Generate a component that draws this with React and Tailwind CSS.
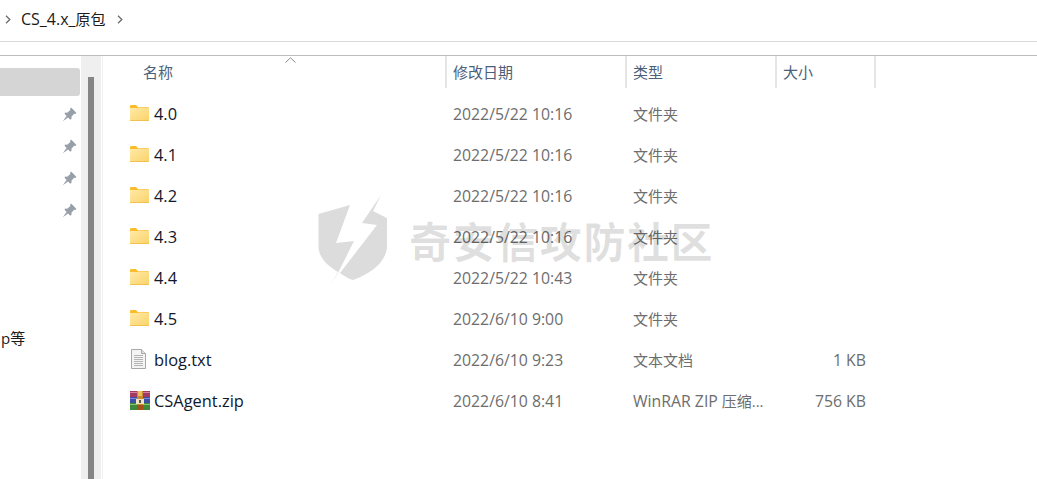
import React from 'react';

const Folder = () => (
  <svg width="19" height="16" viewBox="0 0 19 16" className="shrink-0">
    <defs>
      <linearGradient id="fg" x1="0" y1="0" x2="1" y2="1">
        <stop offset="0" stopColor="#ffeaa8" />
        <stop offset="1" stopColor="#fbd268" />
      </linearGradient>
    </defs>
    <path d="M0 1.5C0 .7.5 0 1.2 0H6l2 2.2h10c.6 0 1 .4 1 1V4H0z" fill="#fbbc2a" />
    <path d="M0 3h19v11.5c0 .8-.5 1.5-1.2 1.5H1.2C.5 16 0 15.300 0 14.500z" fill="url(#fg)" />
    <path d="M0 15h19v.2c0 .5-.5.8-1 .8H1c-.5 0-1-.3-1-.8z" fill="#f2c14e" />
  </svg>
);

const TextFile = () => (
  <svg width="17" height="20" viewBox="0 0 17 20" className="shrink-0">
    <path d="M1.500.5H11.500L15.500 4.500V19.500H1.500z" fill="#f4f4f4" stroke="#a8a8a8" />
    <path d="M11.500.5V4.500H15.500" fill="#e2e2e2" stroke="#a8a8a8" />
    <g stroke="#b4b4b4">
      <path d="M4 6.500H13M4 8.500H13M4 10.500H13M4 12.500H13M4 14.500H13M4 16.500H13" />
    </g>
  </svg>
);

const Rar = () => (
  <svg width="20" height="19" viewBox="0 0 20 19" className="shrink-0">
    <rect x="0" y="0" width="20" height="6" fill="#a33a63" />
    <rect x="0" y="6" width="20" height="6" fill="#3d4fa5" />
    <rect x="0" y="12" width="20" height="7" fill="#3f8a3a" />
    <rect x="0" y="1" width="20" height="1" fill="#d77f9e" />
    <rect x="0" y="7" width="20" height="1" fill="#7d8ad6" />
    <rect x="0" y="13" width="20" height="1" fill="#86c46f" />
    <rect x="7" y="0" width="6" height="19" fill="#c98a2e" />
    <rect x="8" y="0" width="4" height="5" fill="#e8c060" />
    <rect x="6" y="8" width="8" height="5" fill="#efe3c0" />
    <rect x="9" y="9" width="2" height="3" fill="#555" />
    <rect x="7" y="14" width="6" height="5" fill="#a8501c" />
  </svg>
);

const Pin = () => (
  <svg width="15" height="15" viewBox="0 0 14 14" className="block">
    <path d="M8.500 .5L13.500 5.500L12.300 6.500L11.300 6.200L8.800 9.200L8.900 11L7.800 11.800L2.300 6.300L3 5.200L4.800 5.300L7.800 2.700L7.500 1.700z" fill="#97a0a8" />
    <path d="M4.500 8L.8 13.200L6 9.500z" fill="#97a0a8" />
  </svg>
);

const Chev = () => (
  <svg width="6" height="9" viewBox="0 0 6 9"><path d="M1 .8L4.800 4.500L1 8.200" fill="none" stroke="#6b6b6b" strokeWidth="1.300" /></svg>
);

const rows = [
  ['4.0', '2022/5/22 10:16', '文件夹', '', <Folder />],
  ['4.1', '2022/5/22 10:16', '文件夹', '', <Folder />],
  ['4.2', '2022/5/22 10:16', '文件夹', '', <Folder />],
  ['4.3', '2022/5/22 10:16', '文件夹', '', <Folder />],
  ['4.4', '2022/5/22 10:43', '文件夹', '', <Folder />],
  ['4.5', '2022/6/10 9:00', '文件夹', '', <Folder />],
  ['blog.txt', '2022/6/10 9:23', '文本文档', '1 KB', <TextFile />],
  ['CSAgent.zip', '2022/6/10 8:41', <><span className="text-[15.8px]">WinRAR ZIP</span> 压缩...</>, '756 KB', <Rar />],
];

const font = "font-['Open_Sans','Noto_Sans_CJK_SC',sans-serif]";

export default function App() {
  return (
    <div className={`relative flex h-[479px] w-[1037px] flex-col overflow-hidden bg-white ${font}`}>
      <div className="flex h-[42px] shrink-0 items-center border-b border-[#d9d9d9] pb-[3px] pl-[5px]">
        <Chev />
        <span className="ml-[10px] text-[15px] leading-none text-[#1a1a1a]"><span className="text-[16px]">CS_4.x_</span>原包</span>
        <span className="ml-[11px]"><Chev /></span>
      </div>
      <div className="h-[14px] shrink-0 border-b border-[#bdbdbd]" />
      <div className="flex min-h-0 flex-1">
        <div className="relative w-[81px] shrink-0 pt-[12px]">
          <div className="h-[28px] w-[80px] rounded-r-[3px] bg-[#d5d5d5]" />
          <div className="mt-[11px] flex flex-col items-end gap-[17px] pr-[4px]">
            <Pin /><Pin /><Pin /><Pin />
          </div>
          <div className="absolute left-[1px] top-[272px] text-[15px] leading-[20px] text-[#1a1a1a]">p等</div>
        </div>
        <div className="flex w-[20px] shrink-0 justify-center bg-[#efefef] pr-[1px] pt-[21px]">
          <div className="h-full w-[6px] bg-[#858585]" />
        </div>
        <div className="ml-[1px] w-px shrink-0 bg-[#f0f0f0]" />
        <div className="relative flex-1">
          <div className="absolute left-[182px] top-[1px]">
            <svg width="11" height="6" viewBox="0 0 11 6"><path d="M.5 5.500L5.500 .8L10.500 5.500" fill="none" stroke="#8a8a8a" /></svg>
          </div>
          <div className="flex h-[32px] text-[15px] leading-none text-[#4c607a]">
            <div className="flex w-[342px] items-center pl-[40px]">名称</div>
            <div className="flex w-[180px] items-center border-l-2 border-[#e5e5e5] pl-[6px]">修改日期</div>
            <div className="flex w-[150px] items-center border-l-2 border-[#e5e5e5] pl-[6px]">类型</div>
            <div className="flex w-[101px] items-center border-x-2 border-[#e5e5e5] pl-[6px]">大小</div>
          </div>
          <div className="pt-[6px]">
            {rows.map(([name, date, type, size, icon]) => (
              <div key={name} className="flex h-[41px] items-center text-[15px]">
                <div className="flex w-[344px] items-center pl-[27px]">
                  <span className="flex w-[24px] -translate-y-px justify-start">{icon}</span>
                  <span className="text-[16.4px] text-[#10182b]">{name}</span>
                </div>
                <div className="w-[180px] pl-[6px] text-[15.8px] text-[#6d6d6d]">{date}</div>
                <div className="w-[150px] whitespace-nowrap pl-[6px] text-[#6d6d6d]">{type}</div>
                <div className="w-[89px] text-right text-[15.8px] text-[#6d6d6d]">{size}</div>
              </div>
            ))}
          </div>
        </div>
      </div>
      <div className="pointer-events-none absolute left-[318px] top-[194px] flex items-center">
        <svg width="72" height="92" viewBox="0 0 72 92" className="shrink-0">
          <path d="M.5 20L32 11L18 49L36 47L20 79L13 91L20 78C10 72 .5 64 .5 52Z" fill="#dcdcdc" />
          <path d="M63 1L55 17L69 24V52C69 68 52 80 35 86C31 85 26 82 22 79L59 31L44 29Z" fill="#dcdcdc" />
        </svg>
        <span className="ml-[19px] text-[42px] font-bold leading-none tracking-[1.6px] text-[#0000001f] font-['Noto_Sans_CJK_SC',sans-serif]">奇安信攻防社区</span>
      </div>
    </div>
  );
}
